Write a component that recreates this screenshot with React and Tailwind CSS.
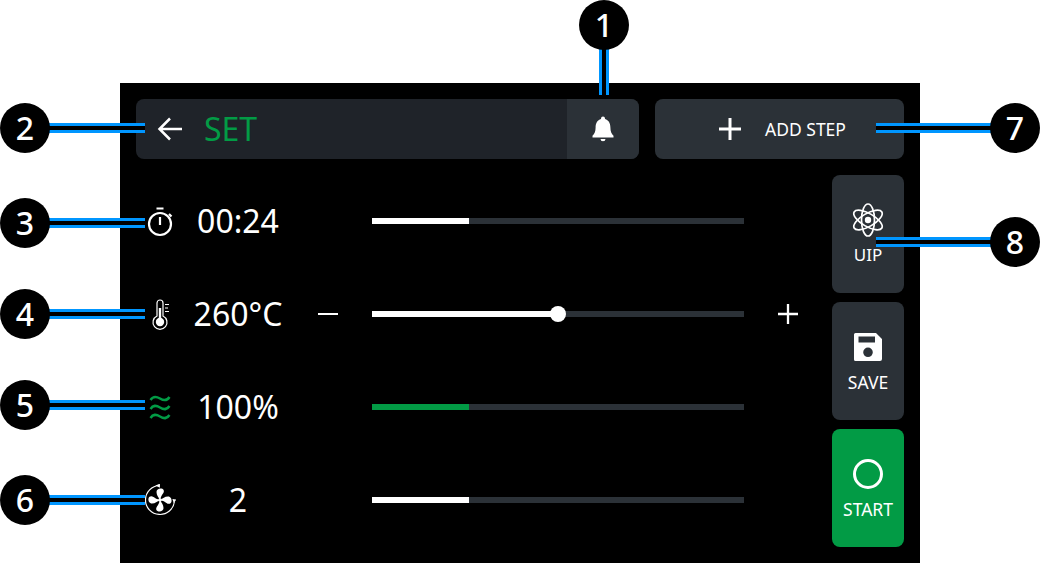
const GREEN = "#029b45";

function Callout({ n, className }) {
  return (
    <div
      className={`absolute flex size-[50px] items-center justify-center rounded-full bg-black text-[32px] font-medium leading-none text-white ${className}`}
    >
      {n}
    </div>
  );
}

function HLine({ className }) {
  return <div className={`absolute flex h-[10px] flex-col justify-between bg-black ${className}`}><i className="h-[3px] bg-[#0096ff]" /><i className="h-[3px] bg-[#0096ff]" /></div>;
}

function VLine({ className }) {
  return <div className={`absolute flex w-[10px] justify-between bg-black ${className}`}><i className="w-[3px] bg-[#0096ff]" /><i className="w-[3px] bg-[#0096ff]" /></div>;
}

function Timer() {
  return (
    <svg width="32" height="32" viewBox="0 0 32 32" fill="none" stroke="white" strokeWidth="2.2">
      <circle cx="16" cy="19" r="11" />
      <path d="M12.500 3.500h7M16 12v8M25 9l2.500 2.500" />
    </svg>
  );
}

function Thermo() {
  return (
    <svg width="32" height="32" viewBox="0 0 32 32" fill="none" stroke="white" strokeWidth="1.2">
      <path d="M13 18V5a3 3 0 0 1 6 0v13a7 7 0 1 1-6 0Z" />
      <circle cx="16" cy="24" r="4.2" fill="white" stroke="none" />
      <path d="M16 10v12" strokeWidth="2.4" />
      <path d="M21 6.500h4M21 10h3M21 13.500h4" />
    </svg>
  );
}

function Waves() {
  return (
    <svg width="32" height="32" viewBox="0 0 32 32" fill="none" stroke={GREEN} strokeWidth="2.400">
      <path d="M6.500 9c2.500-4 5.500-4 9.500-1.500s7 2.500 9.500-1.500" />
      <path d="M6.500 18c2.500-4 5.500-4 9.500-1.500s7 2.500 9.500-1.500" />
      <path d="M6.500 27c2.500-4 5.500-4 9.500-1.500s7 2.500 9.500-1.500" />
    </svg>
  );
}

function Fan() {
  const blade = "M16 16C14.500 13 12.500 11.500 12.500 8C12.500 5.500 15 4 17.500 4.500C20 5 20.500 7.500 19 9.500C17.800 11 16.800 13 16 16Z";
  return (
    <svg width="32" height="32" viewBox="0 0 32 32" fill="none">
      <path d="M15.500 1.500A14.500 14.500 0 1 0 30.400 17.500" stroke="white" strokeWidth="1.2" />
      <path d="M11.500 1.600l4.400-2v4.200ZM28.400 15l4 .6-2.600 3.400Z" fill="white" />
      {[0, 90, 180, 270].map((deg) => (
        <path key={deg} d={blade} fill="white" transform={`rotate(${deg} 16 16)`} />
      ))}
      <circle cx="16" cy="16" r="1.800" fill="white" />
    </svg>
  );
}

function Atom() {
  return (
    <svg width="36" height="36" viewBox="0 0 36 36" fill="none" stroke="white" strokeWidth="1.7">
      <ellipse cx="18" cy="18" rx="16" ry="6.500" transform="rotate(30 18 18)" />
      <ellipse cx="18" cy="18" rx="16" ry="6.500" transform="rotate(90 18 18)" />
      <ellipse cx="18" cy="18" rx="16" ry="6.500" transform="rotate(150 18 18)" />
      <circle cx="18" cy="18" r="3.200" fill="white" stroke="none" />
    </svg>
  );
}

function Disk() {
  return (
    <svg width="36" height="36" viewBox="0 0 36 36" fill="white">
      <path
        fillRule="evenodd"
        d="M5.500 4H26l6 6v20a2 2 0 0 1-2 2H5.500a1.500 1.500 0 0 1-1.500-1.500v-25A1.500 1.500 0 0 1 5.500 4ZM8.500 7.500v6h16.500v-6ZM18 18.500a4.800 4.800 0 1 0 0 9.600a4.800 4.800 0 0 0 0-9.600Z"
      />
    </svg>
  );
}

function Ring() {
  return (
    <svg width="36" height="36" viewBox="0 0 36 36" fill="none" stroke="white" strokeWidth="3">
      <circle cx="18" cy="18" r="13.500" />
    </svg>
  );
}

function Slider({ fill = "bg-white", fillWidth, thumb }) {
  return (
    <div className="flex h-1.5 w-[372px] items-center bg-[#2b3137]">
      <div className={`h-1.5 ${fill} ${fillWidth}`} />
      {thumb && <div className="-ml-2 size-4 shrink-0 rounded-full bg-white" />}
    </div>
  );
}

function SideButton({ icon, label, labelClass = "text-[17.5px]", className }) {
  return (
    <button type="button" className={`flex h-[118px] w-[72px] flex-col items-center rounded-lg pt-[27px] text-white ${className}`}>
      {icon}
      <span className={`mt-[6px] leading-[22px] ${labelClass}`}>{label}</span>
    </button>
  );
}

export default function App() {
  const rows = [
    { icon: <Timer />, value: "00:24", fillWidth: "w-[97px]" },
    { icon: <Thermo />, value: "260°C", fillWidth: "w-[186px]", thumb: true, steppers: true },
    { icon: <Waves />, value: "100%", fillWidth: "w-[97px]", fill: "bg-[#029b45]" },
    { icon: <Fan />, value: "2", fillWidth: "w-[97px]" },
  ];

  return (
    <div className="relative h-[563px] w-[1040px] overflow-hidden bg-white pl-[120px] pt-[83px] font-['Noto_Sans',sans-serif]">
      <main className="h-[480px] w-[800px] bg-black px-4 pt-4">
        <header className="flex h-[60px] gap-4">
          <div className="flex w-[503px] overflow-hidden rounded-lg bg-[#1f2329]">
            <div className="flex flex-1 items-center pl-[20px]">
              <svg width="30" height="30" viewBox="0 0 30 30" fill="none" stroke="white" strokeWidth="2.500">
                <path d="M26 15H4M14 4.500L3.500 15L14 25.500" />
              </svg>
              <span className="ml-[18px] text-[32px] leading-none text-[#029b45]">SET</span>
            </div>
            <div className="flex w-[72px] items-center justify-center bg-[#2b3137]">
              <svg width="28" height="30" viewBox="0 0 28 30" fill="white">
                <path d="M14 2.500a2 2 0 0 1 2 2v.4c3.600 1 5.400 4.300 5.400 8.600c0 4.300 1.200 6.400 3.100 8.300v1.700h-21v-1.700c1.900-1.900 3.100-4 3.100-8.300c0-4.300 1.800-7.600 5.400-8.600v-.4a2 2 0 0 1 2-2ZM11.500 25h5a2.500 2.200 0 0 1-5 0Z" />
              </svg>
            </div>
          </div>
          <button type="button" className="flex w-[249px] items-center rounded-lg bg-[#2b3137] pl-[60px] text-white">
            <svg width="30" height="30" viewBox="0 0 30 30" fill="none" stroke="white" strokeWidth="3">
              <path d="M15 4v22M4 15h22" />
            </svg>
            <span className="ml-[20px] text-[17.5px]">ADD STEP</span>
          </button>
        </header>

        <div className="mt-4 flex">
          <div className="-mt-px grid w-[696px] auto-rows-[93px]">
            {rows.map((row) => (
              <div key={row.value} className="flex items-center">
                <div className="flex w-[48px] justify-center">{row.icon}</div>
                <div className="w-[108px] text-center text-[32px] leading-none text-white">{row.value}</div>
                <div className="flex w-[80px] justify-center pr-2">
                  {row.steppers && <div className="h-0.5 w-5 bg-white" />}
                </div>
                <Slider fill={row.fill} fillWidth={row.fillWidth} thumb={row.thumb} />
                <div className="flex w-[88px] justify-center">
                  {row.steppers && (
                    <svg width="22" height="22" viewBox="0 0 22 22" fill="none" stroke="white" strokeWidth="2.300">
                      <path d="M11 1v20M1 11h20" />
                    </svg>
                  )}
                </div>
              </div>
            ))}
          </div>
          <div className="flex flex-col gap-[9px]">
            <SideButton icon={<Atom />} label="UIP" labelClass="text-[17px]" className="bg-[#2b3137]" />
            <SideButton icon={<Disk />} label="SAVE" className="bg-[#2b3137]" />
            <SideButton icon={<Ring />} label="START" className="bg-[#029b45]" />
          </div>
        </div>
      </main>

      <HLine className="left-[49px] top-[123px] w-[96px]" />
      <HLine className="left-[49px] top-[218px] w-[96px]" />
      <HLine className="left-[49px] top-[309px] w-[96px]" />
      <HLine className="left-[49px] top-[400px] w-[96px]" />
      <HLine className="left-[49px] top-[495px] w-[96px]" />
      <HLine className="left-[876px] top-[123px] w-[116px]" />
      <HLine className="left-[876px] top-[237px] w-[116px]" />
      <VLine className="left-[599px] top-[48px] h-[47px]" />

      <Callout n="1" className="left-[579px] top-0" />
      <Callout n="2" className="left-0 top-[103px]" />
      <Callout n="3" className="left-0 top-[198px]" />
      <Callout n="4" className="left-0 top-[289px]" />
      <Callout n="5" className="left-0 top-[380px]" />
      <Callout n="6" className="left-0 top-[475px]" />
      <Callout n="7" className="left-[990px] top-[103px]" />
      <Callout n="8" className="left-[990px] top-[217px]" />
    </div>
  );
}
